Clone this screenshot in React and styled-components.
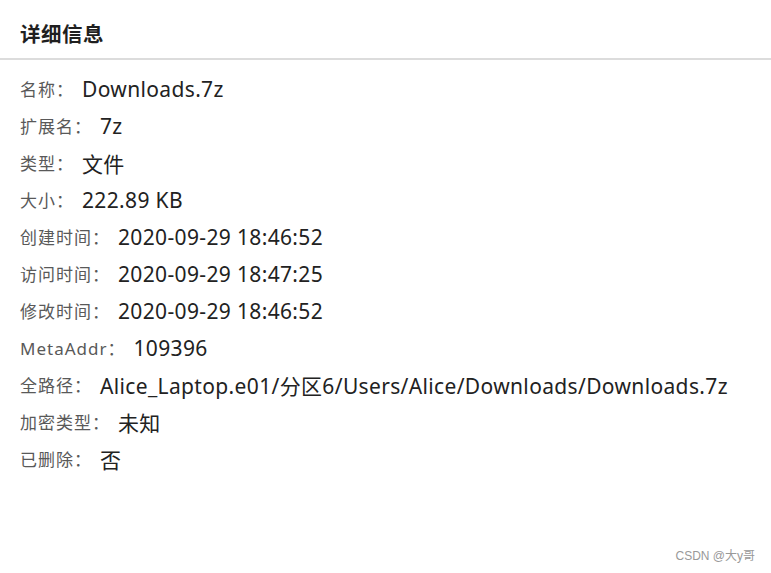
import React from 'react';
import styled, { createGlobalStyle } from 'styled-components';

const GlobalStyle = createGlobalStyle`
  html, body {
    margin: 0;
    padding: 0;
    background: #fff;
  }
  body {
    font-family: "Noto Sans", "Noto Sans CJK SC", sans-serif;
  }
`;

const Page = styled.div`
  position: relative;
  width: 771px;
  height: 573px;
  background: #fff;
  overflow: hidden;
`;

const Header = styled.div`
  height: 60px;
  padding: 8px 20px 0;
  display: flex;
  align-items: center;
  border-bottom: 2px solid #dcdcdc;
  box-sizing: border-box;
`;

const Title = styled.h3`
  margin: 0;
  font-size: 20.5px;
  font-weight: 700;
  color: #1f1f1f;
  font-family: "Noto Sans CJK SC", sans-serif;
  letter-spacing: 0.5px;
`;

const List = styled.div`
  padding: 10px 20px 0;
  display: flex;
  flex-direction: column;
`;

const Row = styled.div`
  display: flex;
  align-items: center;
  height: 37px;
`;

const Label = styled.span`
  font-size: 17px;
  letter-spacing: 1px;
  color: #595959;
  margin-right: 8px;
  white-space: nowrap;
`;

const Value = styled.span`
  font-size: 21px;
  letter-spacing: 0.35px;
  color: #222;
  white-space: nowrap;
`;

const Watermark = styled.div`
  position: absolute;
  right: 16px;
  bottom: 10px;
  font-size: 12px;
  color: #999;
  font-family: "Liberation Sans", "Noto Sans CJK SC", sans-serif;
`;

const fields = [
  ['名称：', 'Downloads.7z'],
  ['扩展名：', '7z'],
  ['类型：', '文件'],
  ['大小：', '222.89 KB'],
  ['创建时间：', '2020-09-29 18:46:52'],
  ['访问时间：', '2020-09-29 18:47:25'],
  ['修改时间：', '2020-09-29 18:46:52'],
  ['MetaAddr：', '109396'],
  ['全路径：', 'Alice_Laptop.e01/分区6/Users/Alice/Downloads/Downloads.7z'],
  ['加密类型：', '未知'],
  ['已删除：', '否'],
];

const App = () => (
  <>
    <GlobalStyle />
    <Page>
      <Header>
        <Title>详细信息</Title>
      </Header>
      <List>
        {fields.map(([label, value]) => (
          <Row key={label}>
            <Label>{label}</Label>
            <Value>{value}</Value>
          </Row>
        ))}
      </List>
      <Watermark>CSDN @大y哥</Watermark>
    </Page>
  </>
);

export default App;
